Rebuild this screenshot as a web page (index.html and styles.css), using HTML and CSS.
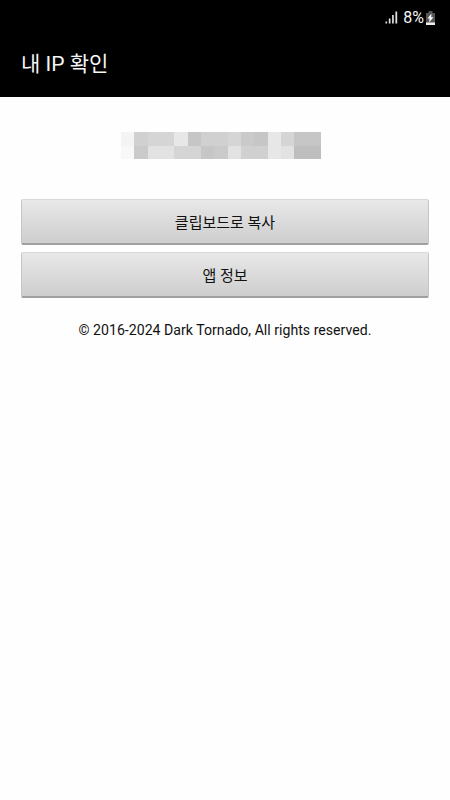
FILE: index.html
```html
<!DOCTYPE html>
<html lang="ko">
<head>
  <meta charset="UTF-8">
  <meta name="viewport" content="width=device-width, initial-scale=1.0">
  <title>내 IP 확인</title>
  <link rel="stylesheet" href="styles.css">
</head>
<body>

  <header>
    <div class="status-bar">
      <svg class="signal" width="13" height="13" viewBox="0 0 13 13" fill="#e0e0e0">
        <rect x="0.5" y="10.5" width="1.6" height="2"/>
        <rect x="3.8" y="7.5" width="1.7" height="5"/>
        <rect x="7.1" y="4" width="1.7" height="8.5"/>
        <rect x="10.4" y="0.5" width="1.8" height="12"/>
      </svg>
      <span class="percent">8%</span>
      <svg class="battery" width="9" height="14" viewBox="0 0 9 14">
        <path d="M2.5 0h4v2H9v12H0V2h2.5z" fill="#555"/>
        <path d="M0 11.5h9V14H0z" fill="#eee"/>
        <path d="M5.5 2.5L1.5 7.5h2.2L3 11.5l4.5-5.3H5.2z" fill="#fff"/>
      </svg>
    </div>
    <h1>내 IP 확인</h1>
  </header>

  <main>
    <!-- Hidden address -->
    <div class="ip-mask">
      <i class="g1"></i><i class="g5"></i><i class="g4"></i><i class="g4"></i><i class="g3"></i>
      <i class="g7"></i><i class="g5"></i><i class="g5"></i><i class="g4"></i><i class="g6"></i>
      <i class="g7"></i><i class="g3"></i><i class="g4"></i><i class="g7"></i><i class="g7"></i>
      <i class="g0"></i><i class="g6"></i><i class="g2"></i><i class="g2"></i><i class="g4"></i>
      <i class="g4"></i><i class="g7"></i><i class="g6"></i><i class="g2"></i><i class="g5"></i>
      <i class="g5"></i><i class="g3"></i><i class="g2"></i><i class="g8"></i><i class="g8"></i>
    </div>

    <button class="btn">클립보드로 복사</button>
    <button class="btn">앱 정보</button>

    <p class="copyright">© 2016-2024 Dark Tornado, All rights reserved.</p>
  </main>

</body>
</html>
```

FILE: styles.css
```css
* { box-sizing: border-box; }

body {
  margin: 0;
  background: #fefefe;
  color: #111;
  font-family: Roboto, "Noto Sans CJK KR", sans-serif;
}

header {
  height: 97px;
  background: #000;
  color: #f5f5f5;
}

.status-bar {
  display: flex;
  align-items: center;
  height: 35px;
  padding-right: 15px;
  justify-content: flex-end;
}

.percent {
  margin: 0 2px 0 5px;
  padding-top: 1px;
  font-size: 16px;
  line-height: 20px;
}

header h1 {
  margin: 14px 0 0 21px;
  font-size: 21px;
  line-height: 30px;
  font-weight: 400;
}

main {
  display: flex;
  flex-direction: column;
  padding: 35px 21px 0;
}

.ip-mask {
  display: grid;
  grid-template-columns: repeat(15, 1fr);
  width: 200px;
  height: 27px;
  margin: 0 0 40px 100px;
}

.g0 { background: #f8f8f8; }
.g1 { background: #f4f4f4; }
.g2 { background: #e2e2e2; }
.g3 { background: #e7e7e7; }
.g4 { background: #d5d5d5; }
.g5 { background: #d0d0d0; }
.g6 { background: #cacaca; }
.g7 { background: #c6c6c6; }
.g8 { background: #bebebe; }

.btn {
  height: 46px;
  margin: 0 0 7px;
  padding: 2px 0 0;
  border: 1px solid #c6c6c6;
  border-top-color: #d8d8d8;
  border-bottom: 2px solid #a0a0a0;
  border-radius: 2px;
  background: linear-gradient(#e8e8e8, #cecece);
  color: #111;
  font-family: inherit;
  font-size: 15px;
  line-height: 20px;
}

.copyright {
  margin: 15px 0 0;
  text-align: center;
  font-size: 14.1px;
  letter-spacing: 0.02px;
  line-height: 20px;
}
```
